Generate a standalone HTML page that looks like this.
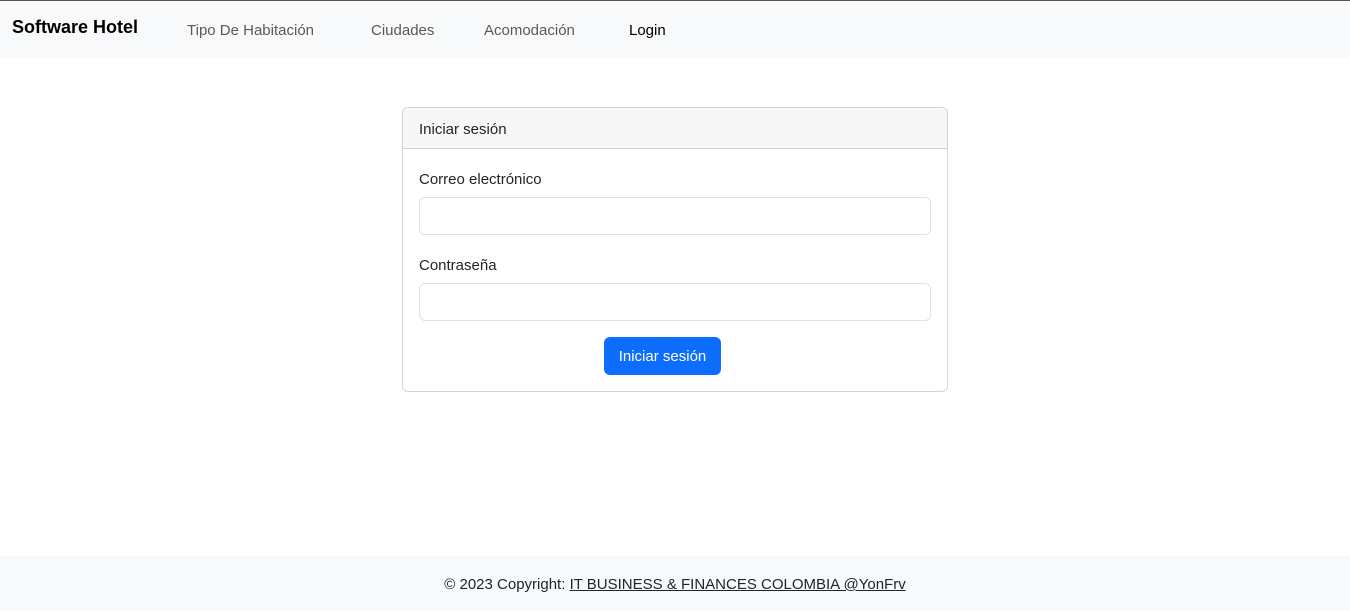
<!DOCTYPE html>
<html><head><meta charset="utf-8"><style>
*{box-sizing:border-box;margin:0;padding:0}
body{width:1350px;height:611px;overflow:hidden;background:#fff;font-family:"Liberation Sans",sans-serif;color:#212529;position:relative;font-size:15px}
.nav{position:absolute;left:0;top:0;width:1350px;height:58px;background:#f8f9fa;border-top:1px solid #555}
.nav span{position:absolute;top:21px;color:rgba(0,0,0,.65);font-size:15px}
.brand{position:absolute;left:12px;top:16px;font-size:18px;color:#000;font-weight:bold}
.card{position:absolute;left:402px;top:107px;width:546px;height:285px;border:1px solid #d4d4d4;border-radius:6px;overflow:hidden}
.ch{height:41px;background:#f7f7f7;border-bottom:1px solid #d4d4d4;padding:13px 16px;font-size:15px}
.lbl{position:absolute;left:16px;font-size:15px}
.inp{position:absolute;left:16px;width:512px;height:38px;border:1px solid #dee2e6;border-radius:6px}
.btn{position:absolute;left:201px;top:229px;width:117px;height:38px;background:#0d6efd;border-radius:6px;color:#fff;font-size:15px;text-align:center;line-height:40px}
.foot{position:absolute;left:0;top:556px;width:1350px;height:55px;background:#f8f9fa;text-align:center;line-height:58px;font-size:15px;color:#212529}
.foot u{color:#212529}
</style></head><body>
<div class="nav">
<div class="brand">Software Hotel</div>
<span style="left:187px">Tipo De Habitación</span>
<span style="left:371px">Ciudades</span>
<span style="left:484px">Acomodación</span>
<span style="left:629px;color:#000">Login</span>
</div>
<div class="card">
<div class="ch">Iniciar sesión</div>
<div class="lbl" style="top:63px">Correo electrónico</div>
<div class="inp" style="top:89px"></div>
<div class="lbl" style="top:149px">Contraseña</div>
<div class="inp" style="top:175px"></div>
<div class="btn">Iniciar sesión</div>
</div>
<div class="foot">© 2023 Copyright: <u>IT BUSINESS &amp; FINANCES COLOMBIA @YonFrv</u></div>
</body></html>
